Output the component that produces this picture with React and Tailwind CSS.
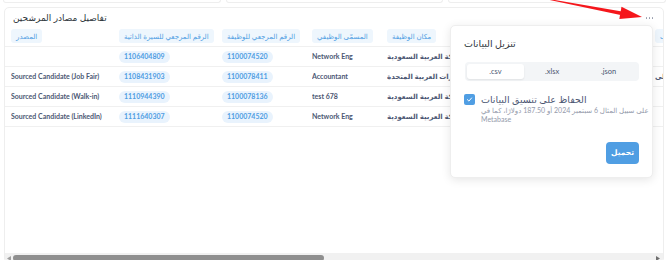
import React from "react";

// أعمدة الجدول (العرض بالبكسل)
const COLUMNS = [
  { key: "source", label: "المصدر", w: "w-[108px]" },
  { key: "cv", label: "الرقم المرجعي للسيرة الذاتية", w: "w-[103px]", pill: true },
  { key: "job", label: "الرقم المرجعي للوظيفة", w: "w-[90px]", pill: true },
  { key: "title", label: "المسمّى الوظيفي", w: "w-[75px]" },
  { key: "place", label: "مكان الوظيفة", w: "w-[268px]" },
  { key: "extra", label: "إكمال الطلب", w: "w-[110px]" },
];

const ROWS = [
  { source: "", cv: "1106404809", job: "1100074520", title: "Network Eng", place: "المملكة العربية السعودية", extra: "" },
  { source: "Sourced Candidate (Job Fair)", cv: "1108431903", job: "1100078411", title: "Accountant", place: "الإمارات العربية المتحدة", extra: "أعلى" },
  { source: "Sourced Candidate (Walk-in)", cv: "1110944390", job: "1100078136", title: "test  678", place: "المملكة العربية السعودية", extra: "" },
  { source: "Sourced Candidate (LinkedIn)", cv: "1111640307", job: "1100074520", title: "Network Eng", place: "المملكة العربية السعودية", extra: "" },
];

const Cell = ({ col, value }) => (
  <div className={`${col.w} shrink-0 flex items-center overflow-hidden whitespace-nowrap`}>
    {col.pill ? (
      <span className="h-[12px] px-[5px] rounded-full bg-[#e9f3fd] text-[#509ee3] text-[7px] font-bold flex items-center">
        {value}
      </span>
    ) : (
      <span className="text-[7px] font-bold text-[#4c5773]">{value}</span>
    )}
  </div>
);

const ExportPopover = () => (
  <div className="absolute left-[450px] top-[25px] w-[203px] h-[153px] bg-white rounded-[5px] border border-[#eeeeee] shadow-[0_2px_10px_rgba(0,0,0,0.10)] flex flex-col px-[13px] pt-[12px] pb-[13px] z-10">
    <div className="h-[12px] text-[9.5px] text-[#2e353b] leading-[12px]">تنزيل البيانات</div>

    {/* اختيار الصيغة */}
    <div className="mt-[12px] ml-[1px] h-[19px] bg-[#f3f5f7] rounded-[4px] p-[2px] flex">
      <div className="flex-1 bg-white rounded-[3px] shadow-[0_1px_2px_rgba(0,0,0,0.08)] flex items-center justify-center text-[7.5px] text-[#4c5773]">
        .csv
      </div>
      <div className="flex-1 flex items-center justify-center text-[7.5px] text-[#4c5773]">.xlsx</div>
      <div className="flex-1 flex items-center justify-center text-[7.5px] text-[#4c5773]">.json</div>
    </div>

    <div className="mt-[13px] flex gap-[6px]">
      <div className="w-[11px] h-[11px] rounded-[2px] bg-[#509ee3] flex items-center justify-center shrink-0">
        <svg width="7" height="7" viewBox="0 0 10 10" fill="none">
          <path d="M2 5.2 L4.2 7.3 L8 2.8" stroke="white" strokeWidth="1.4" strokeLinecap="round" strokeLinejoin="round" />
        </svg>
      </div>
      <div className="flex flex-col">
        <div className="text-[9.5px] leading-[12px] text-[#4c5773]">الحفاظ على تنسيق البيانات</div>
        <div className="text-[7px] leading-[9px] text-[#949aab] whitespace-nowrap">
          على سبيل المثال 6 سبتمبر 2024 أو 187.50 دولارًا، كما في
          <br />
          Metabase
        </div>
      </div>
    </div>

    <div className="mt-auto flex justify-end">
      <button className="w-[33px] h-[22px] rounded-[4px] bg-[#509ee3] text-white text-[7.5px] font-bold flex items-center justify-center">
        تحميل
      </button>
    </div>
  </div>
);

export default function App() {
  return (
    <div className="relative w-[670px] h-[260px] overflow-hidden bg-white font-[Lato,'DejaVu_Sans',sans-serif]">
      {/* أسفل البطاقات العلوية */}
      <div className="flex gap-[5px] pl-[3px] pr-[4px]">
        <div className="flex-1 h-[3px] border-x border-b border-[#eeeeee] rounded-b-[4px]" />
        <div className="flex-1 h-[3px] border-x border-b border-[#eeeeee] rounded-b-[4px]" />
        <div className="flex-1 h-[3px] border-x border-b border-[#eeeeee] rounded-b-[4px]" />
      </div>

      {/* بطاقة الجدول */}
      <div className="mt-[4px] ml-[4px] w-[660px] h-[256px] border border-[#eeeeee] rounded-[5px] flex flex-col overflow-hidden">
        <div className="h-[19px] shrink-0 flex items-center justify-between pl-[8px] pr-[10px]">
          <span className="text-[9px] text-[#2e353b]">تفاصيل مصادر المرشحين</span>
          <span className="flex gap-[1.5px] mt-[1px]">
            <span className="w-[1.5px] h-[1.5px] rounded-full bg-[#949aab]" />
            <span className="w-[1.5px] h-[1.5px] rounded-full bg-[#949aab]" />
            <span className="w-[1.5px] h-[1.5px] rounded-full bg-[#949aab]" />
          </span>
        </div>

        {/* رأس الجدول */}
        <div className="h-[20px] shrink-0 flex pl-[6px] border-b border-[#f0f0f0]">
          {COLUMNS.map((col) => (
            <div key={col.key} className={`${col.w} shrink-0 flex items-start pt-[2px] overflow-hidden whitespace-nowrap`}>
              <span className="h-[14px] px-[5px] rounded-[3px] bg-[#eef6fd] text-[#509ee3] text-[7px] flex items-center">
                {col.label}
              </span>
            </div>
          ))}
        </div>

        {ROWS.map((row, i) => (
          <div key={i} className="h-[20px] shrink-0 flex pl-[6px] border-b border-[#f0f0f0]">
            {COLUMNS.map((col) => (
              <Cell key={col.key} col={col} value={row[col.key]} />
            ))}
          </div>
        ))}

        {/* شريط التمرير الأفقي */}
        <div className="mt-auto h-[9px] shrink-0 bg-[#f1f1f1] flex items-start pt-[2px] px-[2px] gap-[2px]">
          <svg width="4" height="5" viewBox="0 0 4 5" className="mt-[1px]">
            <path d="M4 0 L0 2.5 L4 5 Z" fill="#a0a0a0" />
          </svg>
          <div className="w-[311px] h-[6px] rounded-full bg-[#8f8f8f]" />
          <div className="flex-1" />
          <svg width="4" height="5" viewBox="0 0 4 5" className="mt-[1px] mr-[1px]">
            <path d="M0 0 L4 2.5 L0 5 Z" fill="#6f6f6f" />
          </svg>
        </div>
      </div>

      <ExportPopover />

      {/* سهم التوضيح الأحمر */}
      <svg className="absolute inset-0 z-20 pointer-events-none" width="670" height="260" viewBox="0 0 670 260">
        <polygon points="545,-1 549,-1 622,11.5 620.5,15" fill="#f5161b" />
        <polygon points="621.5,6.8 642,17 619.3,19" fill="#f5161b" />
      </svg>
    </div>
  );
}
